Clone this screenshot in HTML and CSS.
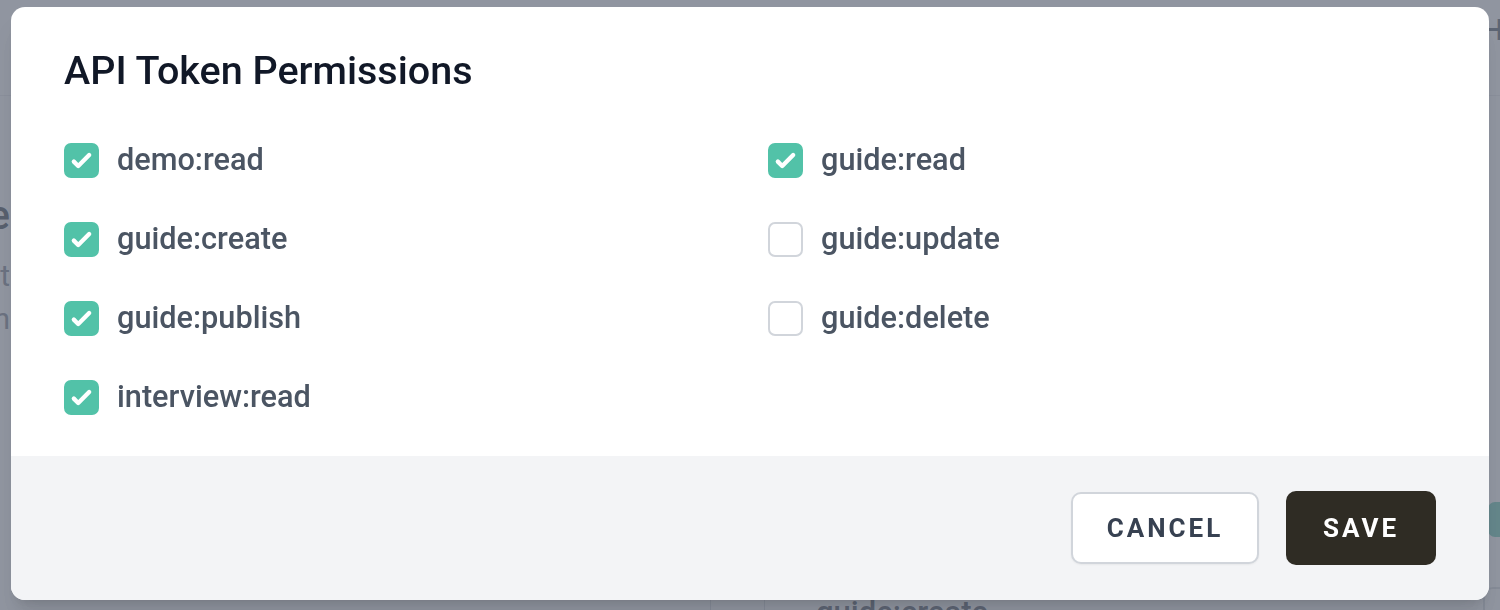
FILE: index.html
```html
<!DOCTYPE html>
<html lang="en">
<head>
<meta charset="utf-8">
<title>API Token Permissions</title>
<link rel="stylesheet" href="styles.css">
</head>
<body>
<div class="page">
  <header class="topbar">
    <span class="topbar-text">Help</span>
  </header>
  <main class="page-main">
    <div class="side-left">
      <h2 class="bg-title">Guide</h2>
      <p class="bg-line">Account</p>
      <p class="bg-line">Action</p>
    </div>
    <div class="bg-center">
      <div class="bg-row">
        <span class="bg-cell"></span>
        <span class="bg-cell bg-cell-small"></span>
        <span class="bg-box"></span>
        <span class="bg-label">guide:create</span>
      </div>
    </div>
    <div class="side-right">
      <span class="bg-check"></span>
      <span class="bg-card"></span>
    </div>
  </main>
</div>

<div class="overlay">
  <div class="modal" role="dialog" aria-labelledby="modal-title">
    <div class="modal-body">
      <h1 class="modal-title" id="modal-title">API Token Permissions</h1>
      <div class="perm-grid">
        <label class="perm">
          <span class="box checked"><svg viewBox="0 0 16 16" class="tick"><path d="M12.207 4.793a1 1 0 010 1.414l-5 5a1 1 0 01-1.414 0l-2-2a1 1 0 011.414-1.414L6.5 9.086l4.293-4.293a1 1 0 011.414 0z" fill="#fff"/></svg></span>
          <span class="perm-label">demo:read</span>
        </label>
        <label class="perm">
          <span class="box checked"><svg viewBox="0 0 16 16" class="tick"><path d="M12.207 4.793a1 1 0 010 1.414l-5 5a1 1 0 01-1.414 0l-2-2a1 1 0 011.414-1.414L6.5 9.086l4.293-4.293a1 1 0 011.414 0z" fill="#fff"/></svg></span>
          <span class="perm-label">guide:read</span>
        </label>
        <label class="perm">
          <span class="box checked"><svg viewBox="0 0 16 16" class="tick"><path d="M12.207 4.793a1 1 0 010 1.414l-5 5a1 1 0 01-1.414 0l-2-2a1 1 0 011.414-1.414L6.5 9.086l4.293-4.293a1 1 0 011.414 0z" fill="#fff"/></svg></span>
          <span class="perm-label">guide:create</span>
        </label>
        <label class="perm">
          <span class="box"></span>
          <span class="perm-label">guide:update</span>
        </label>
        <label class="perm">
          <span class="box checked"><svg viewBox="0 0 16 16" class="tick"><path d="M12.207 4.793a1 1 0 010 1.414l-5 5a1 1 0 01-1.414 0l-2-2a1 1 0 011.414-1.414L6.5 9.086l4.293-4.293a1 1 0 011.414 0z" fill="#fff"/></svg></span>
          <span class="perm-label">guide:publish</span>
        </label>
        <label class="perm">
          <span class="box"></span>
          <span class="perm-label">guide:delete</span>
        </label>
        <label class="perm">
          <span class="box checked"><svg viewBox="0 0 16 16" class="tick"><path d="M12.207 4.793a1 1 0 010 1.414l-5 5a1 1 0 01-1.414 0l-2-2a1 1 0 011.414-1.414L6.5 9.086l4.293-4.293a1 1 0 011.414 0z" fill="#fff"/></svg></span>
          <span class="perm-label">interview:read</span>
        </label>
      </div>
    </div>
    <div class="modal-footer">
      <button class="btn btn-cancel" type="button">Cancel</button>
      <button class="btn btn-save" type="button">Save</button>
    </div>
  </div>
</div>
</body>
</html>
```

FILE: styles.css
```css
* { box-sizing: border-box; }

html, body {
  margin: 0;
  padding: 0;
}

body {
  width: 1500px;
  height: 610px;
  overflow: hidden;
  background: #ffffff;
  font-family: Roboto, "Liberation Sans", Arial, sans-serif;
  color: #111827;
}

/* ---------- background page (under the overlay) ---------- */
.page {
  height: 610px;
  display: flex;
  flex-direction: column;
}

.topbar {
  flex: none;
  height: 96px;
  border-bottom: 1px solid #e5e7eb;
  display: flex;
  justify-content: flex-end;
  padding-top: 12px;
}

.topbar-text {
  margin-right: -44px;
  font-size: 30px;
  font-weight: 500;
  color: #374151;
}

.page-main {
  flex: 1;
  min-height: 0;
  display: flex;
}

.side-left {
  width: 10px;
  display: flex;
  flex-direction: column;
  align-items: flex-end;
  padding-top: 100px;
}

.bg-title {
  margin: 0;
  font-size: 40px;
  font-weight: 500;
  color: #1f2937;
  white-space: nowrap;
  line-height: 40px;
}

.bg-line {
  margin: 20px 0 0;
  font-size: 30px;
  color: #6b7280;
  white-space: nowrap;
  line-height: 40px;
}

.bg-line + .bg-line { margin-top: 3px; }

.bg-center {
  flex: 1;
  display: flex;
  flex-direction: column;
  justify-content: flex-end;
}

.bg-row {
  display: flex;
  align-items: flex-start;
  height: 20px;
  margin-bottom: -10px;
  padding-left: 700px;
}

.bg-cell {
  width: 54px;
  height: 40px;
  border-left: 1px solid #d1d5db;
}

.bg-cell-small { width: 32px; }

.bg-box { width: 0; }

.bg-label {
  margin-left: 20px;
  margin-top: -6px;
  font-size: 31px;
  font-weight: 500;
  color: #374151;
}

.side-right {
  width: 11px;
  display: flex;
  flex-direction: column;
  padding-top: 406px;
}

.bg-check {
  display: block;
  flex: none;
  width: 35px;
  height: 35px;
  border-radius: 7px;
  background: #52c2a8;
  margin-left: -1px;
}

.bg-card {
  display: block;
  flex: none;
  width: 40px;
  height: 40px;
  margin-top: 50px;
  margin-left: -6px;
  border: 2px solid #d1d5db;
  border-radius: 10px;
}

/* ---------- overlay + modal ---------- */
.overlay {
  position: fixed;
  inset: 0;
  background: rgba(107, 114, 128, 0.75);
  padding: 7px 11px 10px;
  display: flex;
}

.modal {
  width: 1478px;
  height: 593px;
  background: #ffffff;
  border-radius: 14px;
  overflow: hidden;
  display: flex;
  flex-direction: column;
  box-shadow: 0 20px 25px -5px rgba(0,0,0,0.1), 0 8px 10px -6px rgba(0,0,0,0.1);
}

.modal-body {
  flex: 1;
  padding: 44px 53px 0;
}

.modal-title {
  margin: 0;
  font-size: 39.5px;
  line-height: 40px;
  font-weight: 500;
  color: #111827;
}

.perm-grid {
  margin-top: 52px;
  display: grid;
  grid-template-columns: 1fr 1fr;
  column-gap: 36px;
  row-gap: 44px;
}

.perm {
  display: flex;
  align-items: center;
  gap: 18px;
  height: 35px;
}

.box {
  flex: none;
  width: 35px;
  height: 35px;
  border-radius: 7px;
  border: 2px solid #d1d5db;
  background: #ffffff;
  display: flex;
  align-items: center;
  justify-content: center;
}

.box.checked {
  border-color: #52c2a8;
  background: #52c2a8;
}

.tick {
  width: 35px;
  height: 35px;
  flex: none;
}

.perm-label {
  font-size: 30.7px;
  font-weight: 500;
  color: #4b5563;
  line-height: 1;
}

.modal-footer {
  height: 144px;
  background: #f3f4f6;
  padding: 0 53px;
  display: flex;
  align-items: center;
  justify-content: flex-end;
  gap: 27px;
}

.btn {
  font-family: Roboto, "Liberation Sans", Arial, sans-serif;
  font-size: 26px;
  font-weight: 700;
  letter-spacing: 3px;
  text-transform: uppercase;
  border-radius: 10px;
  cursor: pointer;
  display: flex;
  align-items: center;
  justify-content: center;
}

.btn-cancel {
  width: 188px;
  height: 72px;
  background: #ffffff;
  border: 2px solid #d1d5db;
  color: #374151;
  box-shadow: 0 1px 2px rgba(0,0,0,0.05);
}

.btn-save {
  width: 150px;
  height: 74px;
  background: #2f2c24;
  border: none;
  color: #ffffff;
}
```
